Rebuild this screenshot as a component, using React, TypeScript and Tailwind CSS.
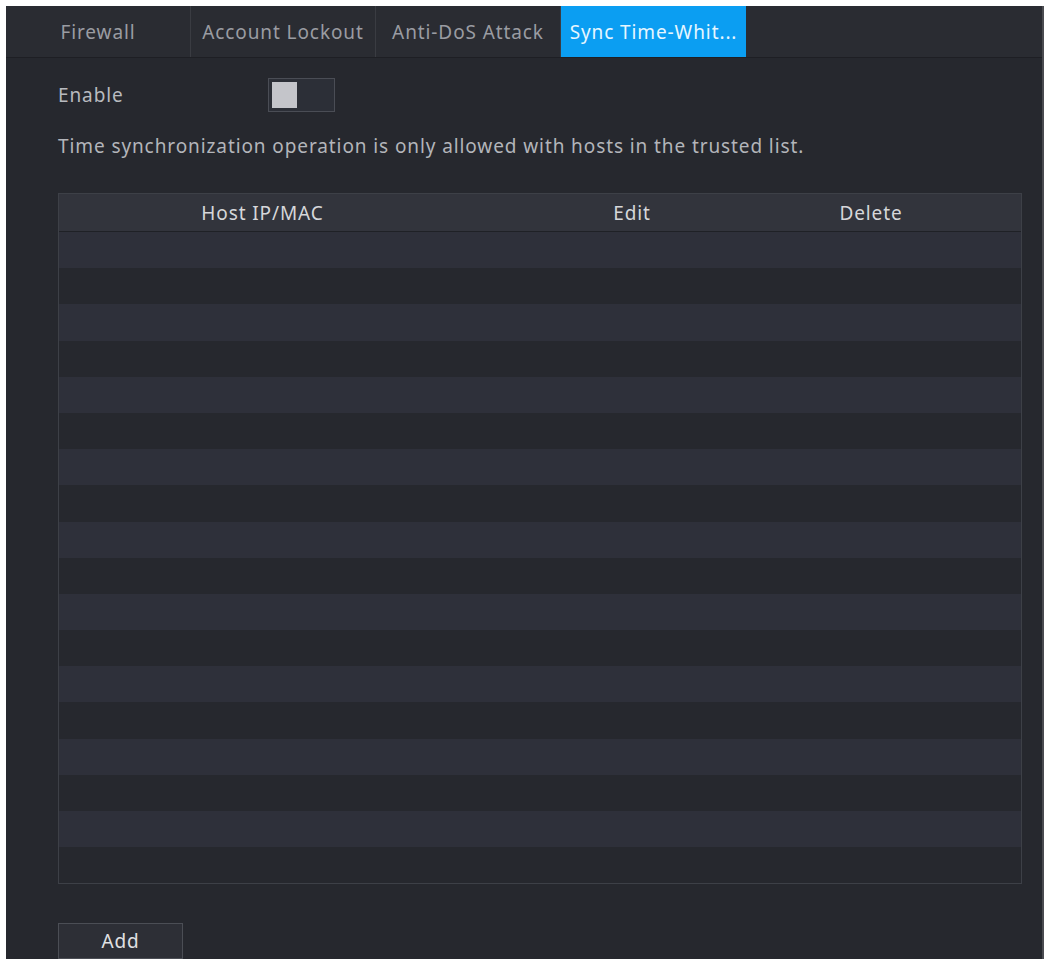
import React from "react";

const tabs = ["Firewall", "Account Lockout", "Anti-DoS Attack", "Sync Time-Whit..."];

function TabBar() {
  return (
    <div className="flex h-[52px] bg-[#25262c] border-b border-[#1e1f24]">
      {tabs.map((t, i) => {
        const active = i === 3;
        return (
          <div
            key={t}
            className={
              active
                ? "w-[185px] flex items-center justify-center bg-[#0b9ef2] text-[#e6f6ff]"
                : "w-[185px] flex items-center justify-center bg-[#2a2c32] text-[#9a9ca2] border-r border-[#3a3c42]"
            }
          >
            {t}
          </div>
        );
      })}
      <div className="flex-1 bg-[#2a2c32]"></div>
    </div>
  );
}

function Toggle() {
  return (
    <div className="w-[67px] h-[34px] border border-[#4a4d55] bg-[#2c2f37] p-[3px] flex">
      <div className="w-[25px] h-full bg-[#c4c5ca]"></div>
    </div>
  );
}

function TrustTable() {
  const rows = Array.from({ length: 18 }, (_, i) => i);
  return (
    <div className="border border-[#3d4047] bg-[#26282e]">
      <div className="grid grid-cols-[407px_332px_146px_1fr] h-[38px] items-center bg-[#32343c] border-b border-[#1f2126] text-[#d6d7da]">
        <p className="text-center">Host IP/MAC</p>
        <p className="text-center">Edit</p>
        <p className="text-center">Delete</p>
        <p></p>
      </div>
      {rows.map((r) => (
        <div
          key={r}
          className={r % 2 === 0 ? "h-[36.2px] bg-[#2e303a]" : "h-[36.2px] bg-[#26282e]"}
        ></div>
      ))}
    </div>
  );
}

export default function App() {
  return (
    <div className="w-[1048px] h-[959px] bg-white pt-[6px] pl-[6px] pr-[4px] overflow-hidden">
      <div
        className="h-full bg-[#26282e] border-r-2 border-[#4a4b50] text-[19px] leading-[26px] tracking-[0.9px]"
        style={{ fontFamily: '"Noto Sans", "Open Sans", sans-serif' }}
      >
        <TabBar />
        <div className="pl-[52px] pr-[20px]">
          <div className="flex items-center h-[34px] mt-[20px]">
            <p className="w-[210px] text-[#b8babf]">Enable</p>
            <Toggle />
          </div>
          <p className="mt-[21px] text-[#b3b5ba]">
            Time synchronization operation is only allowed with hosts in the trusted list.
          </p>
          <div className="mt-[34px]">
            <TrustTable />
          </div>
          <button className="mt-[39px] w-[125px] h-[36px] border border-[#4b4e55] bg-[#2d2f36] text-[#e0e1e3]">
            Add
          </button>
        </div>
      </div>
    </div>
  );
}
